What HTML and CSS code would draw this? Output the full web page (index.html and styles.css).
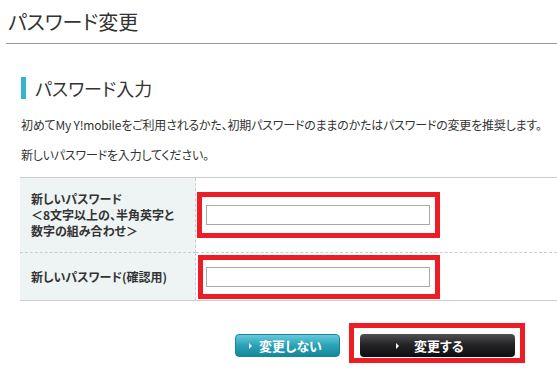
FILE: index.html
```html
<!DOCTYPE html>
<html lang="ja">
<head>
<meta charset="utf-8">
<link rel="stylesheet" href="styles.css">
</head>
<body>
<h1 class="page-title">パスワード変更</h1>
<div class="content">
  <h2 class="section-title">パスワード入力</h2>
  <p class="lead">初めてMy Y!mobileをご利用されるかた、初期パスワードのままのかたはパスワードの変更を推奨します。</p>
  <p class="lead second">新しいパスワードを入力してください。</p>
  <div class="form-table">
    <div class="label first-row">新しいパスワード<br>＜8文字以上の、半角英字と<br>数字の組み合わせ＞</div>
    <div class="field first-row"><div class="highlight"><input class="text-input" type="password"></div></div>
    <div class="label">新しいパスワード(確認用)</div>
    <div class="field"><div class="highlight second"><input class="text-input" type="password"></div></div>
  </div>
  <div class="actions">
    <button class="btn btn-cancel"><span class="tri"></span>変更しない</button>
    <div class="highlight-btn">
      <button class="btn btn-submit"><span class="tri"></span>変更する</button>
    </div>
  </div>
</div>
</body>
</html>
```
FILE: styles.css
```css
* { box-sizing: border-box; }
html, body { margin: 0; padding: 0; background: #fff; }
body {
  font-family: "Noto Sans CJK JP", "Liberation Sans", sans-serif;
  font-feature-settings: "palt";
  color: #333;
  width: 557px;
  overflow: hidden;
}
.page-title {
  margin: 0 0 0 6px;
  padding: 12px 0 11px 2px;
  font-size: 20px;
  line-height: 20px;
  font-weight: normal;
  color: #333;
  border-bottom: 1px solid #999;
}
.content { padding-left: 21px; }
.section-title {
  margin: 33px 0 0 0;
  border-left: 5px solid #33b5cc;
  padding-left: 9px;
  font-size: 18px;
  line-height: 22px;
  height: 22px;
  font-weight: normal;
  color: #333;
}
.lead {
  margin: 17px 0 0 0;
  font-size: 12px;
  line-height: 18px;
  white-space: nowrap;
  letter-spacing: -0.2px;
}
.lead.second { margin-top: 12px; }
.form-table {
  margin-top: 13px;
  display: grid;
  grid-template-columns: 176px 1fr;
  border-top: 1px solid #ccc;
  border-bottom: 1px solid #ccc;
  margin-left: -1px;
}
.label {
  background: #eef4f4;
  border-right: 1px dashed #ccc;
  font-size: 12px;
  font-weight: bold;
  line-height: 16px;
  padding-left: 11px;
  display: flex;
  align-items: center;
  height: 47px;
  color: #333;
}
.label.first-row { height: 75px; border-bottom: 1px dashed #ccc; }
.field {
  display: flex;
  align-items: center;
  padding-left: 1px;
  height: 47px;
}
.field.first-row { height: 75px; border-bottom: 1px dashed #ccc; }
.highlight {
  border: 5px solid #ee1c25;
  padding: 8px 5px 8px 4px;
  width: 243px;
  height: 46px;
}
.highlight.second { height: 44px; padding: 7px 5px 7px 3px; margin-left: 1px; width: 242px; }
.text-input {
  display: block;
  width: 224px;
  height: 20px;
  border: 1px solid #aaa;
  margin: 0;
  padding: 0;
  background: #fff;
}
.actions {
  display: flex;
  align-items: flex-start;
  margin-top: 22px;
  padding-left: 214px;
}
.btn {
  font-family: "Noto Sans CJK JP", "Liberation Sans", sans-serif;
  font-feature-settings: "palt";
  font-size: 13px;
  font-weight: bold;
  color: #fff;
  height: 23px;
  border: none;
  border-radius: 4px;
  display: flex;
  align-items: center;
  padding: 0;
  line-height: 23px;
  cursor: pointer;
}
.tri {
  width: 0; height: 0;
  border-left: 3px solid #fff;
  border-top: 3px solid transparent;
  border-bottom: 3px solid transparent;
}
.btn-cancel {
  width: 105px;
  margin-top: 11px;
  background: linear-gradient(#66cadb, #2aa2b6 50%, #15889b);
  border: 1px solid #1a8799;
  padding-left: 13px;
}
.btn-cancel .tri { margin-right: 7px; }
.highlight-btn {
  margin-left: 9px;
  border: 5px solid #ee1c25;
  padding: 6px 5px 1px 6px;
}
.btn-submit {
  width: 155px;
  background: linear-gradient(#505052, #252527 45%, #0d0d10);
  padding-left: 36px;
}
.btn-submit .tri { margin-right: 15px; }
```
